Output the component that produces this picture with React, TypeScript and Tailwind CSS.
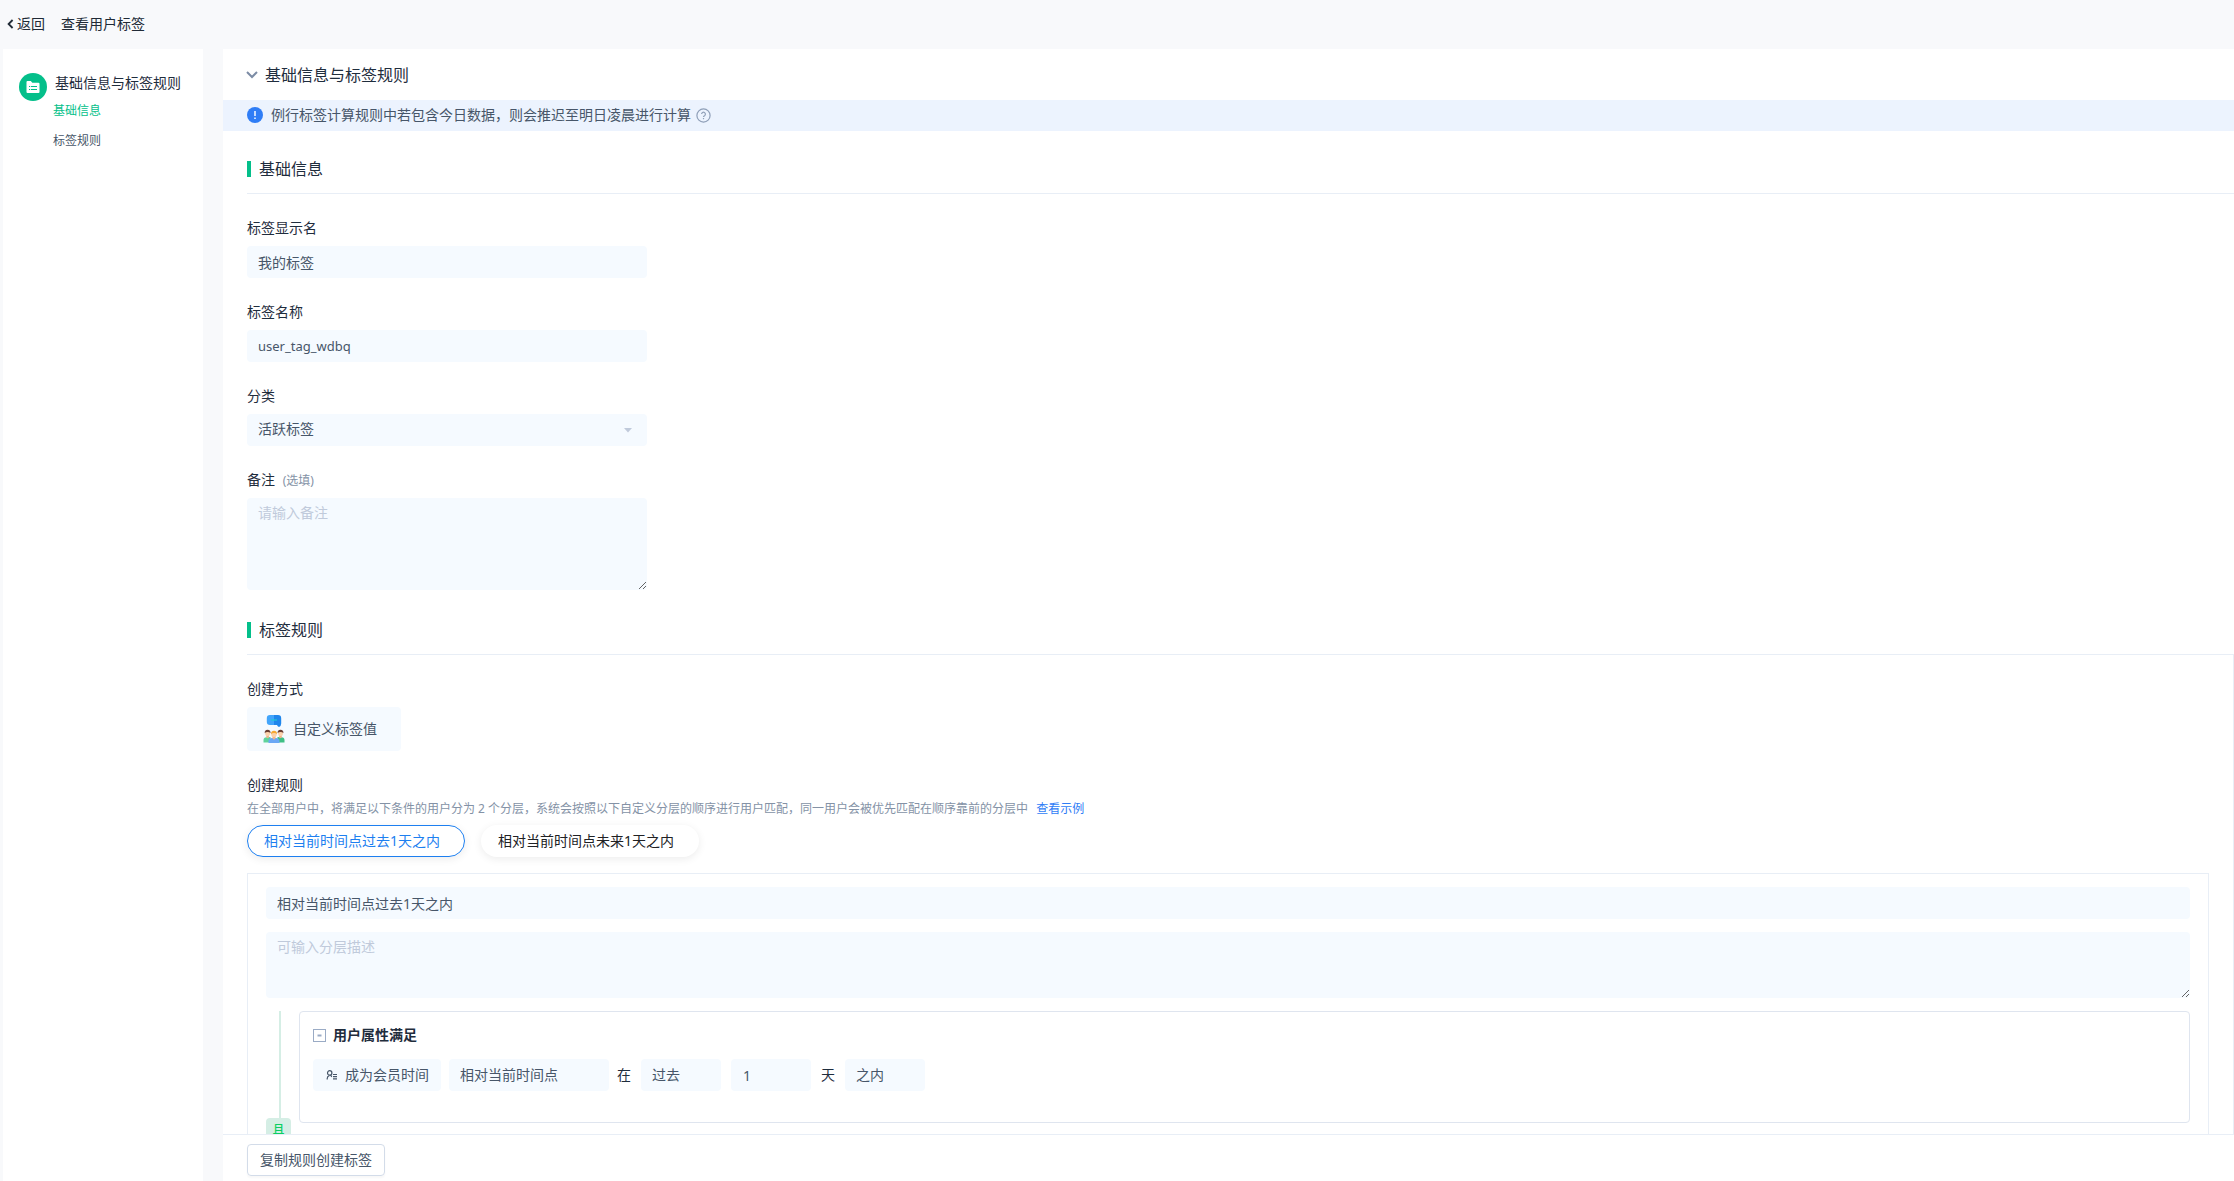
import React from "react";

const fieldBase =
  "block w-full rounded bg-[#f5faff] leading-5 text-[#475669] outline-none";

function SectionTitle({ children }: { children: React.ReactNode }) {
  return (
    <h2 className="flex items-center gap-2 text-base leading-4 text-[#1f2d3d]">
      <span className="h-4 w-1 bg-[#04bf8a]" />
      {children}
    </h2>
  );
}

function BackIcon() {
  return (
    <svg width="7" height="10" viewBox="0 0 7 10" fill="none" stroke="#202a36" strokeWidth="1.8">
      <path d="M5.6 1 1.6 5l4 4" />
    </svg>
  );
}

function FolderIcon() {
  return (
    <svg width="14" height="14" viewBox="0 0 14 14">
      <path d="M0.500 2Q.5 1 1.500 1h3.300l1.500 1.700h6.200q1 0 1 1v8.300q0 1-1 1h-11q-1 0-1-1z" fill="#fff" />
      <path d="M3 6.500h1.200M5 6.500h6M3 9.500h1.200M5 9.500h6" stroke="#04bf8a" strokeWidth="1" />
    </svg>
  );
}

function HelpIcon() {
  return (
    <svg width="15" height="15" viewBox="0 0 15 15" fill="none" stroke="#8f9fb8" strokeWidth="1.2">
      <circle cx="7.5" cy="7.5" r="6.6" />
      <path d="M5.6 6.1a1.900 1.900 0 1 1 2.900 1.600c-.7.4-1 .7-1 1.400" />
      <path d="M7.500 10v1.200" />
    </svg>
  );
}

function PeopleIcon() {
  return (
    <svg width="22" height="28" viewBox="0 0 22 28">
      <path d="M7 0h4v10H7a3.200 3.200 0 0 1-3.200-3.200V3.200A3.200 3.200 0 0 1 7 0z" fill="#41a4fb" />
      <path d="M11 0h4a3.200 3.200 0 0 1 3.200 3.200V8.500q0 2.500-2.200 3.500-1.500-.3-2-2h-3z" fill="#1f86ec" />
      <path d="M8 5h6" stroke="#21c8d6" strokeWidth="1.2" />
      <path d="M.5 27.500V25q0-2.500 3-2.800L7.500 22v5.500z" fill="#5fd39b" />
      <path d="M21.500 27.500V25q0-2.500-3-2.800l-4-.2v5.500z" fill="#3fbf85" />
      <path d="M3.300 20h2.600v2.500l-1.300.8-1.300-.8zM16.200 20h2.600v2.500l-1.300.8-1.300-.8z" fill="#f0b48a" />
      <circle cx="4.600" cy="18.500" r="2.500" fill="#fcd3ae" />
      <circle cx="17.500" cy="18.500" r="2.500" fill="#fcd3ae" />
      <path d="M1.700 18.300q-.3-3.600 2.900-3.600t2.900 3.600q-1-1.300-2.900-1.300t-2.900 1.300zM14.600 18.300q-.3-3.600 2.900-3.600t2.900 3.600q-1-1.300-2.900-1.300t-2.900 1.300z" fill="#6b3f34" />
      <path d="M5.500 28v-2q0-2.600 3.500-2.900h4q3.500.3 3.500 2.900v2z" fill="#6aa7f5" />
      <path d="M9.500 21h3v2.500l-1.500 1.300-1.500-1.300z" fill="#f0b48a" />
      <circle cx="11" cy="19.600" r="2.700" fill="#fcd0a8" />
      <path d="M8 19.300q-.3-3.500 3-3.500t3 3.500q-1-1.200-3-1.200t-3 1.200z" fill="#f6a833" />
    </svg>
  );
}

function UserFieldIcon() {
  return (
    <svg width="12" height="10" viewBox="0 0 12 10" fill="none" stroke="#475669" strokeWidth="1.2">
      <path d="M1.200 9.500V8.500q0-2.300 2.300-3" />
      <circle cx="3.700" cy="2.900" r="2.200" />
      <path d="m4.500 5 1.300 1.800" />
      <path d="M7 4.500h4M7 6.700h4M7 8.900h4" />
    </svg>
  );
}

function Picker({ label, value, width }: { label: string; value: string; width: string }) {
  return (
    <select
      aria-label={label}
      defaultValue={value}
      className={`h-8 appearance-none rounded bg-[#f5faff] px-[11px] text-sm leading-5 text-[#475669] outline-none ${width}`}
    >
      <option>{value}</option>
    </select>
  );
}

export default function App() {
  return (
    <div className="flex h-screen flex-col bg-[#f8f9fb] font-['Noto_Sans','Noto_Sans_CJK_SC',sans-serif] text-sm text-[#1f2d3d]">
      <header className="flex h-[49px] shrink-0 items-center gap-4 pb-0.5 pl-[7px] text-[#202a36]">
        <button className="flex items-center gap-[3px] leading-5">
          <BackIcon />
          返回
        </button>
        <h1 className="leading-5">查看用户标签</h1>
      </header>

      <div className="flex min-h-0 flex-1 gap-5 pl-[3px]">
        <nav className="flex w-[200px] shrink-0 items-start gap-1.5 bg-white pt-6 pl-4">
          <span className="flex size-7 shrink-0 items-center justify-center rounded-full bg-[#04bf8a]">
            <FolderIcon />
          </span>
          <div className="flex flex-col items-start">
            <span className="pl-0.5 leading-5">基础信息与标签规则</span>
            <a href="#basic" className="mt-2.5 text-xs leading-4 text-[#04bf8a]">
              基础信息
            </a>
            <a href="#rules" className="mt-3.5 text-xs leading-4 text-[#475669]">
              标签规则
            </a>
          </div>
        </nav>

        <main className="flex min-w-0 flex-1 flex-col bg-white">
          <div className="min-h-0 flex-1 overflow-y-auto [scrollbar-width:none]">
            <button className="flex h-[51px] items-center gap-[7px] pl-[23px] text-base leading-6">
              <svg width="12" height="8" viewBox="0 0 12 8" fill="none" stroke="#7c8ca5" strokeWidth="2">
                <path d="m1 1 5 5 5-5" />
              </svg>
              基础信息与标签规则
            </button>

            <div className="flex h-[31px] items-center bg-[#ecf3fe] pb-px pl-6 text-[#475669]">
              <svg width="16" height="16" viewBox="0 0 16 16">
                <circle cx="8" cy="8" r="8" fill="#2f7df6" />
                <path d="M8 4v5M8 10.500v1.500" stroke="#d6e6ff" strokeWidth="1.8" />
              </svg>
              <span className="mr-[5px] ml-2 leading-5">
                例行标签计算规则中若包含今日数据，则会推迟至明日凌晨进行计算
              </span>
              <HelpIcon />
            </div>

            <section id="basic" className="mt-[30px] ml-6">
              <SectionTitle>基础信息</SectionTitle>
              <div className="mt-4 border-t border-[#e8eef6]">
                <div className="flex w-[400px] flex-col gap-6 pt-6">
                  <div className="flex flex-col gap-2">
                    <label htmlFor="display" className="leading-5">标签显示名</label>
                    <input id="display" defaultValue="我的标签" className={`${fieldBase} h-8 px-[11px] text-sm`} />
                  </div>
                  <div className="flex flex-col gap-2">
                    <label htmlFor="name" className="leading-5">标签名称</label>
                    <input id="name" defaultValue="user_tag_wdbq" className={`${fieldBase} h-8 px-[11px] text-[13px]`} />
                  </div>
                  <div className="flex flex-col gap-2">
                    <label htmlFor="category" className="leading-5">分类</label>
                    <div className="relative">
                      <select id="category" className={`${fieldBase} h-8 appearance-none px-[11px] pb-0.5 text-sm`}>
                        <option>活跃标签</option>
                      </select>
                      <svg
                        className="pointer-events-none absolute top-3.5 right-[15px]"
                        width="8"
                        height="5"
                        viewBox="0 0 8 5"
                      >
                        <path d="M0 0h8L4 4.500z" fill="#c0cadb" />
                      </svg>
                    </div>
                  </div>
                  <div className="flex flex-col gap-2">
                    <label htmlFor="remark" className="leading-5">
                      备注 <span className="ml-1 text-xs text-[#8492a6]">(选填)</span>
                    </label>
                    <textarea
                      id="remark"
                      placeholder="请输入备注"
                      className={`${fieldBase} h-[92px] resize-y px-[11px] py-[5px] text-sm placeholder:text-[#c0cadb]`}
                    />
                  </div>
                </div>
              </div>
            </section>

            <section id="rules" className="mt-8 ml-6">
              <SectionTitle>标签规则</SectionTitle>
              <div className="mt-4 border-t border-r border-[#e8eef6] pt-6 pr-6">
                <h3 className="leading-5">创建方式</h3>
                <button className="mt-2 flex h-11 w-[154px] items-center gap-2 rounded bg-[#f5faff] pl-4 leading-5 text-[#475669]">
                  <PeopleIcon />
                  自定义标签值
                </button>

                <h3 className="mt-6 leading-5">创建规则</h3>
                <p className="mt-1.5 text-xs leading-4 text-[#8492a6]">
                  在全部用户中，将满足以下条件的用户分为 2 个分层，系统会按照以下自定义分层的顺序进行用户匹配，同一用户会被优先匹配在顺序靠前的分层中
                  <a href="#example" className="ml-2 text-[#2f7df6]">查看示例</a>
                </p>
                <div className="mt-2 flex gap-4">
                  <button className="h-8 w-[218px] rounded-full border border-[#1d7ff0] pl-4 text-left leading-5 text-[#1d7ff0] shadow-[0_2px_8px_rgba(0,0,0,0.08)]">
                    相对当前时间点过去1天之内
                  </button>
                  <button className="h-8 w-[218px] rounded-full pl-[17px] text-left leading-5 text-[#202124] shadow-[0_2px_8px_rgba(0,0,0,0.08)]">
                    相对当前时间点未来1天之内
                  </button>
                </div>

                <div className="mt-4 flex flex-col gap-[13px] border border-[#e8eef6] px-[18px] py-[13px]">
                  <input
                    aria-label="分层名称"
                    defaultValue="相对当前时间点过去1天之内"
                    className={`${fieldBase} h-8 px-[11px] text-sm`}
                  />
                  <textarea
                    aria-label="分层描述"
                    placeholder="可输入分层描述"
                    className={`${fieldBase} h-[66px] resize-y px-[11px] py-[5px] text-sm placeholder:text-[#c0cadb]`}
                  />
                  <div className="flex items-start gap-2">
                    <div className="flex w-[25px] shrink-0 flex-col items-start">
                      <span className="ml-[13px] h-[107px] w-0.5 bg-[#d5eee5]" />
                      <span className="w-full rounded bg-[#d5eee5] py-0.5 text-center text-xs leading-5 font-medium text-[#0bcf62]">
                        且
                      </span>
                    </div>
                    <div className="min-w-0 flex-1 rounded border border-[#dfe5ef] px-[13px] pt-[13px] pb-[31px]">
                      <button className="flex items-center gap-[7px] leading-5 font-bold">
                        <svg width="13" height="13" viewBox="0 0 13 13" fill="none" stroke="#9aabc5">
                          <rect x="0.5" y="0.5" width="12" height="12" />
                          <path d="M4.500 6.500h4" strokeWidth="2" />
                        </svg>
                        用户属性满足
                      </button>
                      <div className="mt-3.5 flex items-center gap-2 leading-5">
                        <button className="flex h-8 w-32 items-center gap-[7px] rounded bg-[#f5faff] pl-[13px] text-[#475669]">
                          <UserFieldIcon />
                          成为会员时间
                        </button>
                        <Picker label="时间类型" value="相对当前时间点" width="w-40" />
                        <span>在</span>
                        <div className="ml-0.5 flex items-center gap-2.5">
                          <Picker label="方向" value="过去" width="w-20" />
                          <input
                            aria-label="天数"
                            defaultValue="1"
                            className="h-8 w-20 rounded bg-[#f5faff] px-3 leading-5 text-[#475669] outline-none"
                          />
                          <span>天</span>
                          <Picker label="范围" value="之内" width="w-20" />
                        </div>
                      </div>
                    </div>
                  </div>
                </div>
              </div>
            </section>
          </div>

          <footer className="h-[47px] shrink-0 border-t border-[#e8eef6] pt-[9px] pl-6">
            <button className="h-8 rounded border border-[#d3dce9] px-3 leading-5 text-[#475669] shadow-[0_2px_2px_rgba(0,0,0,0.03)]">
              复制规则创建标签
            </button>
          </footer>
        </main>
      </div>
    </div>
  );
}
